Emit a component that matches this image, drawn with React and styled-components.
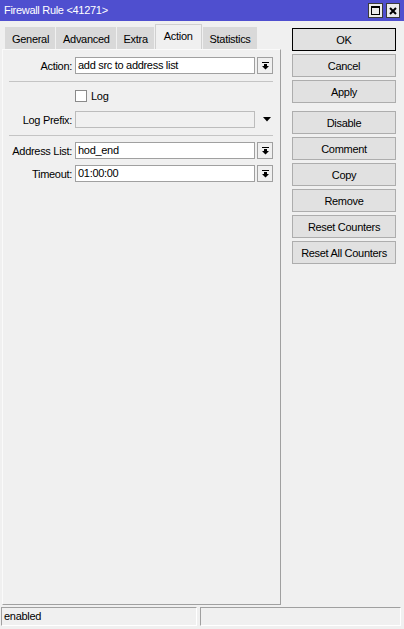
import React from 'react';
import styled, { createGlobalStyle } from 'styled-components';

const Global = createGlobalStyle`
  html, body { margin: 0; padding: 0; background: #f0f0f0; }
  #root { width: 404px; height: 629px; }
  * { box-sizing: border-box; }
`;

const Window = styled.div`
  width: 404px;
  height: 629px;
  display: flex;
  flex-direction: column;
  background: #f0f0f0;
  font-family: "Liberation Sans", Arial, sans-serif;
  font-size: 11px;
  letter-spacing: -0.3px;
  color: #000;
  overflow: hidden;
`;

const TitleBar = styled.div`
  height: 21px;
  flex: none;
  background: #4f4fcf;
  display: flex;
  align-items: center;
  padding: 0 4px 0 4px;
  color: #fff;
`;

const Title = styled.div`
  flex: 1;
  line-height: 21px;
`;

const TitleButtons = styled.div`
  display: flex;
  gap: 3px;
`;

const TitleBtn = styled.div`
  width: ${p => p.$w}px;
  height: 15px;
  background: #ececec;
  border: 1px solid #3a3a3a;
  display: flex;
  align-items: center;
  justify-content: center;
`;

const Body = styled.div`
  flex: 1;
  display: flex;
  padding-top: 3px;
  min-height: 0;
`;

const LeftCol = styled.div`
  width: 279px;
  margin-left: 2px;
  display: flex;
  flex-direction: column;
`;

const TabRow = styled.div`
  height: 25px;
  display: flex;
  align-items: flex-end;
  gap: 1px;
  padding-left: 3px;
`;

const Tab = styled.div`
  height: ${p => (p.$active ? 25 : 22)}px;
  padding: 0 ${p => (p.$active ? '8px' : '5px 0 6px')};
  padding-bottom: ${p => (p.$active ? 3 : 0)}px;
  padding-top: ${p => (p.$active ? 0 : 1)}px;
  background: ${p => (p.$active ? '#f0f0f0' : '#d9d9d9')};
  border: 1px solid ${p => (p.$active ? '#d0d0d0' : '#d9d9d9')};
  border-bottom: none;
  display: flex;
  align-items: center;
  position: relative;
  z-index: ${p => (p.$active ? 1 : 0)};
`;

const Panel = styled.div`
  flex: 1;
  border-top: 1px solid #fafafa;
  border-left: 1px solid #fafafa;
  border-right: 1px solid #a0a0a0;
  border-bottom: 1px solid #a0a0a0;
  padding-top: 7px;
  display: flex;
  flex-direction: column;
`;

const Row = styled.div`
  display: flex;
  align-items: center;
  height: ${p => p.$h || 17}px;
  margin-top: ${p => p.$mt || 0}px;
`;

const Label = styled.div`
  width: 72px;
  text-align: right;
  padding-right: 3px;
  white-space: nowrap;
`;

const Field = styled.div`
  width: 180px;
  height: 17px;
  border: 1px solid ${p => (p.$disabled ? '#bcbcbc' : '#a0a0a0')};
  background: ${p => (p.$disabled ? '#f0f0f0' : '#fff')};
  padding: 0 2px;
  line-height: 15px;
  white-space: nowrap;
  overflow: hidden;
`;

const DropBtn = styled.div`
  width: 16px;
  height: 17px;
  margin-left: 2px;
  border: 1px solid #a0a0a0;
  background: #f0f0f0;
  display: flex;
  align-items: center;
  justify-content: center;
`;

const PlainArrow = styled.div`
  width: 16px;
  margin-left: 4px;
  display: flex;
  align-items: center;
  justify-content: center;
`;

const Separator = styled.div`
  height: 1px;
  width: 264px;
  margin-left: 6px;
  margin-top: ${p => p.$mt}px;
  background: #c4c4c4;
`;

const Check = styled.div`
  width: 12px;
  height: 12px;
  margin-left: 72px;
  border: 1px solid #8a8a8a;
  background: #fff;
`;

const CheckLabel = styled.div`
  margin-left: 4px;
`;

const RightCol = styled.div`
  width: 104px;
  margin-left: 11px;
  padding-top: 4px;
  display: flex;
  flex-direction: column;
`;

const Button = styled.div`
  height: 23px;
  margin-top: ${p => p.$mt ?? 3}px;
  background: #e1e1e1;
  border: 1px solid ${p => (p.$default ? '#000' : '#adadad')};
  display: flex;
  align-items: center;
  justify-content: center;
  white-space: nowrap;
`;

const StatusBar = styled.div`
  height: 24px;
  flex: none;
  display: flex;
  gap: 3px;
  padding: 2px 0 0 1px;
`;

const StatusBox = styled.div`
  width: ${p => p.$w}px;
  height: 19px;
  border-top: 1px solid #a0a0a0;
  border-left: 1px solid #a0a0a0;
  border-right: 1px solid #fff;
  border-bottom: 1px solid #fff;
  padding-left: 2px;
  line-height: 17px;
`;

const DropIcon = () => (
  <svg width="7" height="8" viewBox="0 0 7 8">
    <rect x="0" y="0" width="7" height="1" fill="#000" />
    <path d="M2 2h3v2h2L3.5 7.5 0 4h2z" fill="#000" />
  </svg>
);

const TriIcon = () => (
  <svg width="8" height="5" viewBox="0 0 8 5">
    <path d="M0 0h8L4 4.5z" fill="#000" />
  </svg>
);

export default function App() {
  const tabs = ['General', 'Advanced', 'Extra', 'Action', 'Statistics'];
  return (
    <>
      <Global />
      <Window>
        <TitleBar>
          <Title>Firewall Rule &lt;41271&gt;</Title>
          <TitleButtons>
            <TitleBtn $w={15}>
              <svg width="9" height="9" viewBox="0 0 9 9">
                <rect x="0.5" y="0.5" width="8" height="8" fill="none" stroke="#000" />
                <rect x="0" y="0" width="9" height="2" fill="#000" />
              </svg>
            </TitleBtn>
            <TitleBtn $w={14}>
              <svg width="8" height="8" viewBox="0 0 8 8">
                <path d="M1 1L7 7M7 1L1 7" stroke="#000" strokeWidth="2" />
              </svg>
            </TitleBtn>
          </TitleButtons>
        </TitleBar>
        <Body>
          <LeftCol>
            <TabRow>
              {tabs.map(t => (
                <Tab key={t} $active={t === 'Action'}>{t}</Tab>
              ))}
            </TabRow>
            <Panel>
              <Row>
                <Label>Action:</Label>
                <Field>add src to address list</Field>
                <DropBtn><DropIcon /></DropBtn>
              </Row>
              <Separator $mt={7} />
              <Row $h={12} $mt={8}>
                <Check />
                <CheckLabel>Log</CheckLabel>
              </Row>
              <Row $mt={9}>
                <Label>Log Prefix:</Label>
                <Field $disabled />
                <PlainArrow><TriIcon /></PlainArrow>
              </Row>
              <Separator $mt={7} />
              <Row $mt={6}>
                <Label>Address List:</Label>
                <Field>hod_end</Field>
                <DropBtn><DropIcon /></DropBtn>
              </Row>
              <Row $mt={6}>
                <Label>Timeout:</Label>
                <Field>01:00:00</Field>
                <DropBtn><DropIcon /></DropBtn>
              </Row>
            </Panel>
          </LeftCol>
          <RightCol>
            <Button $default $mt={0}>OK</Button>
            <Button>Cancel</Button>
            <Button>Apply</Button>
            <Button $mt={8}>Disable</Button>
            <Button>Comment</Button>
            <Button>Copy</Button>
            <Button>Remove</Button>
            <Button>Reset Counters</Button>
            <Button>Reset All Counters</Button>
          </RightCol>
        </Body>
        <StatusBar>
          <StatusBox $w={196}>enabled</StatusBox>
          <StatusBox $w={201} />
        </StatusBar>
      </Window>
    </>
  );
}
